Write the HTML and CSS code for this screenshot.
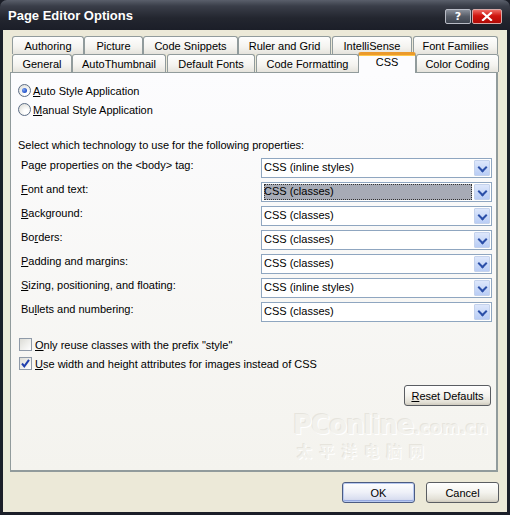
FILE: index.html
```html
<!DOCTYPE html>
<html>
<head>
<meta charset="utf-8">
<link rel="stylesheet" href="styles.css">
</head>
<body>
<div class="window">
  <div class="titlebar">
    <span class="title">Page Editor Options</span>
    <div class="tbtns">
      <span class="tbtn help">?</span>
      <span class="tbtn close">
        <svg width="12" height="9" viewBox="0 0 12 9"><path d="M2 1 L10 8 M10 1 L2 8" stroke="#fff" stroke-width="2.2" stroke-linecap="square"/></svg>
      </span>
    </div>
  </div>
  <div class="client">
    <div class="tabs">
      <div class="tabrow back">
        <div class="tab t1a">Authoring</div>
        <div class="tab t1b">Picture</div>
        <div class="tab t1c">Code Snippets</div>
        <div class="tab t1d">Ruler and Grid</div>
        <div class="tab t1e">IntelliSense</div>
        <div class="tab t1f">Font Families</div>
      </div>
      <div class="tabrow front">
        <div class="tab t2a">General</div>
        <div class="tab t2b">AutoThumbnail</div>
        <div class="tab t2c">Default Fonts</div>
        <div class="tab t2d">Code Formatting</div>
        <div class="tab t2e sel">CSS</div>
        <div class="tab t2f">Color Coding</div>
      </div>
    </div>
    <div class="panel">
      <div class="opt first"><span class="radio on"></span><span><u>A</u>uto Style Application</span></div>
      <div class="opt"><span class="radio"></span><span><u>M</u>anual Style Application</span></div>
      <div class="intro">Select which technology to use for the following properties:</div>
      <div class="props">
        <div class="prow"><span class="plabel">Pa<u>g</u>e properties on the &lt;body&gt; tag:</span><div class="combo"><span class="cval">CSS (inline styles)</span><span class="cbtn"></span></div></div>
        <div class="prow"><span class="plabel"><u>F</u>ont and text:</span><div class="combo"><span class="cval focus">CSS (classes)</span><span class="cbtn"></span></div></div>
        <div class="prow"><span class="plabel"><u>B</u>ackground:</span><div class="combo"><span class="cval">CSS (classes)</span><span class="cbtn"></span></div></div>
        <div class="prow"><span class="plabel">Bo<u>r</u>ders:</span><div class="combo"><span class="cval">CSS (classes)</span><span class="cbtn"></span></div></div>
        <div class="prow"><span class="plabel"><u>P</u>adding and margins:</span><div class="combo"><span class="cval">CSS (classes)</span><span class="cbtn"></span></div></div>
        <div class="prow"><span class="plabel"><u>S</u>izing, positioning, and floating:</span><div class="combo"><span class="cval">CSS (inline styles)</span><span class="cbtn"></span></div></div>
        <div class="prow"><span class="plabel">Bu<u>l</u>lets and numbering:</span><div class="combo"><span class="cval">CSS (classes)</span><span class="cbtn"></span></div></div>
      </div>
      <div class="opt chk1"><span class="check"></span><span><u>O</u>nly reuse classes with the prefix "style"</span></div>
      <div class="opt"><span class="check on"><svg width="11" height="11" viewBox="0 0 11 11"><path d="M2 5.5 L4.3 8.3 L9 1.8" stroke="#1f3fae" stroke-width="2" fill="none"/></svg></span><span><u>U</u>se width and height attributes for images instead of CSS</span></div>
      <div class="resetrow"><button class="btn"><u>R</u>eset Defaults</button></div>
      <div class="watermark"><div class="wm1">PConline<span class="wm1s">.com.cn</span></div><div class="wm2">太 平 洋 电 脑 网</div></div>
    </div>
    <div class="footer">
      <button class="btn ok">OK</button>
      <button class="btn">Cancel</button>
    </div>
  </div>
</div>
</body>
</html>
```

FILE: styles.css
```css
* { box-sizing: border-box; }
html, body { margin: 0; padding: 0; background: #1a1d26; }
body { font-family: "Liberation Sans", Arial, sans-serif; font-size: 11px; color: #000; }
u { text-decoration: underline; text-underline-offset: 1px; }

.window {
  width: 510px; height: 515px;
  background: #1b1e28;
  border-radius: 7px 7px 0 0;
  overflow: hidden;
}
.titlebar {
  height: 30px;
  display: flex; align-items: center; justify-content: space-between;
  padding: 0 8px 0 8px;
  background: linear-gradient(#5a5f6b 0%, #3a3e49 20%, #23262f 60%, #1b1e28 100%);
}
.title {
  color: #fff; font-family: "Liberation Sans", Arial, sans-serif; font-weight: bold; font-size: 13px;
  margin-top: 1px;
}
.tbtns { display: flex; gap: 1px; margin-top: 2px; }
.tbtn {
  height: 15px; border: 1px solid #b9bcc6; border-radius: 2px;
  display: flex; align-items: center; justify-content: center;
  color: #fff; font-family: "DejaVu Sans", sans-serif; font-weight: bold; font-size: 11px;
}
.help { width: 26px; background: linear-gradient(#8a909b, #555b66 50%, #3e444f); }
.close { width: 30px; background: linear-gradient(#ee6a62, #d0150f 45%, #b00a06); border-color: #d8a9a7; }

.client {
  margin: 0 3px;
  height: 482px;
  background: #ece9d8;
  padding: 6px 0 0 7px;
  display: flex; flex-direction: column;
}
.tabs { position: relative; height: 36px; padding-left: 2px; }
.tabrow { display: flex; height: 18px; }
.tab {
  height: 18px;
  border: 1px solid #919b9c; border-bottom: none;
  border-radius: 3px 3px 0 0;
  background: linear-gradient(#fefefe, #f4f3ef 60%, #e5e3dc);
  display: flex; align-items: center; justify-content: center;
  padding-top: 1px;
  white-space: nowrap;
}
.t1a { width: 72px; } .t1b { width: 59px; } .t1c { width: 95px; }
.t1d { width: 93px; } .t1e { width: 80px; margin-left: 1px; } .t1f { width: 85px; margin-left: 1px; }
.t2a { width: 60px; } .t2b { width: 94px; } .t2c { width: 88px; margin-left: 1px; }
.t2d { width: 103px; margin-left: 1px; } .t2f { width: 83px; }
.t2e { width: 58px; }
.tab.sel {
  position: relative; z-index: 2;
  height: 21px; margin-top: -2px;
  margin-left: -1px;
  background: #fcfcfe;
  border-top: 3px solid #eb9a2c;
  box-shadow: inset 0 1px 0 #ffc84a;
  align-items: flex-start; padding-top: 1px;
}

.panel {
  position: relative;
  width: 488px; height: 400px;
  border: 1px solid #919b9c;
  border-right: 2px solid #919b9c; border-bottom: 2px solid #919b9c;
  background: linear-gradient(#fcfcfe, #f4f3ee);
  padding: 8px 0 0 7px;
  display: flex; flex-direction: column;
}
.opt { display: flex; align-items: center; height: 19px; gap: 2px; }
.radio {
  width: 13px; height: 13px; border-radius: 50%;
  border: 1px solid #5c6d86;
  background: radial-gradient(circle at 65% 70%, #ffffff 20%, #e1e1dc 80%);
  display: flex; align-items: center; justify-content: center;
}
.radio.on::after {
  content: ""; width: 5px; height: 5px; border-radius: 50%;
  background: radial-gradient(circle at 35% 35%, #7aa2f0, #2350c8 70%);
}
.intro { margin-top: 18px; height: 16px; line-height: 16px; }
.props { display: flex; flex-direction: column; gap: 4px; margin-top: 5px; margin-left: 3px; }
.prow { display: flex; align-items: flex-start; height: 20px; justify-content: space-between; width: 471px; }
.plabel { line-height: 14px; }
.combo {
  width: 231px; height: 20px;
  border: 1px solid #8fa6c0;
  background: #fff;
  display: flex; align-items: center; padding: 1px 1px 1px 2px;
}
.cval { flex: 1; height: 16px; line-height: 15px; margin-right: 2px; }
.cval.focus { background: #a7abb6; outline: 1px dotted #333; outline-offset: -1px; }
.cbtn {
  width: 16px; height: 16px;
  border: 1px solid #c4d2ec;
  border-radius: 1px;
  background: linear-gradient(#dde7fb, #b9cdf5);
  position: relative;
}
.cbtn::after {
  content: ""; position: absolute; left: 4px; top: 3px;
  width: 5px; height: 5px;
  border-right: 2px solid #2b4fa8; border-bottom: 2px solid #2b4fa8;
  transform: rotate(45deg);
}
.chk1 { margin-top: 13px; }
.check {
  width: 13px; height: 13px;
  border: 1px solid #8f9aa8;
  background: linear-gradient(135deg, #dcdcd6, #ffffff);
  display: flex; align-items: center; justify-content: center;
  margin-left: 1px; margin-right: 1px;
}
.resetrow { display: flex; justify-content: flex-end; margin-top: 12px; padding-right: 5px; }
.btn {
  font-family: inherit; font-size: 11px; color: #000;
  width: 87px; height: 21px;
  border: 1px solid #5a5d62; border-radius: 3px;
  background: linear-gradient(#ffffff, #f4f3ee 50%, #e3e0d6 85%, #cfcabe);
  padding: 0;
}
.watermark {
  position: absolute; left: 282px; top: 338px;
  color: #f2f1ec;
  text-shadow: 1px 1px 0 #ffffff, -1px -1px 0 #e6e4dd;
  font-family: "DejaVu Sans", sans-serif; font-weight: bold;
  pointer-events: none;
}
.wm1 { font-size: 26px; letter-spacing: -1px; line-height: 28px; }
.wm1s { font-size: 17px; letter-spacing: 0; }
.wm2 { font-family: "Noto Sans CJK SC", sans-serif; font-size: 15px; line-height: 18px; letter-spacing: 2px; margin-left: 4px; }

.footer { display: flex; justify-content: flex-end; gap: 11px; padding-right: 8px; margin-top: 10px; }
.footer .btn { width: 73px; }
.btn.ok {
  border-color: #4b5b82;
  box-shadow: inset 0 0 0 1px #b8c9f0, inset 0 -2px 0 #96a9e0;
  background: linear-gradient(#ffffff, #eef0f8 50%, #d9def0 85%, #c4cbe6);
}
```
